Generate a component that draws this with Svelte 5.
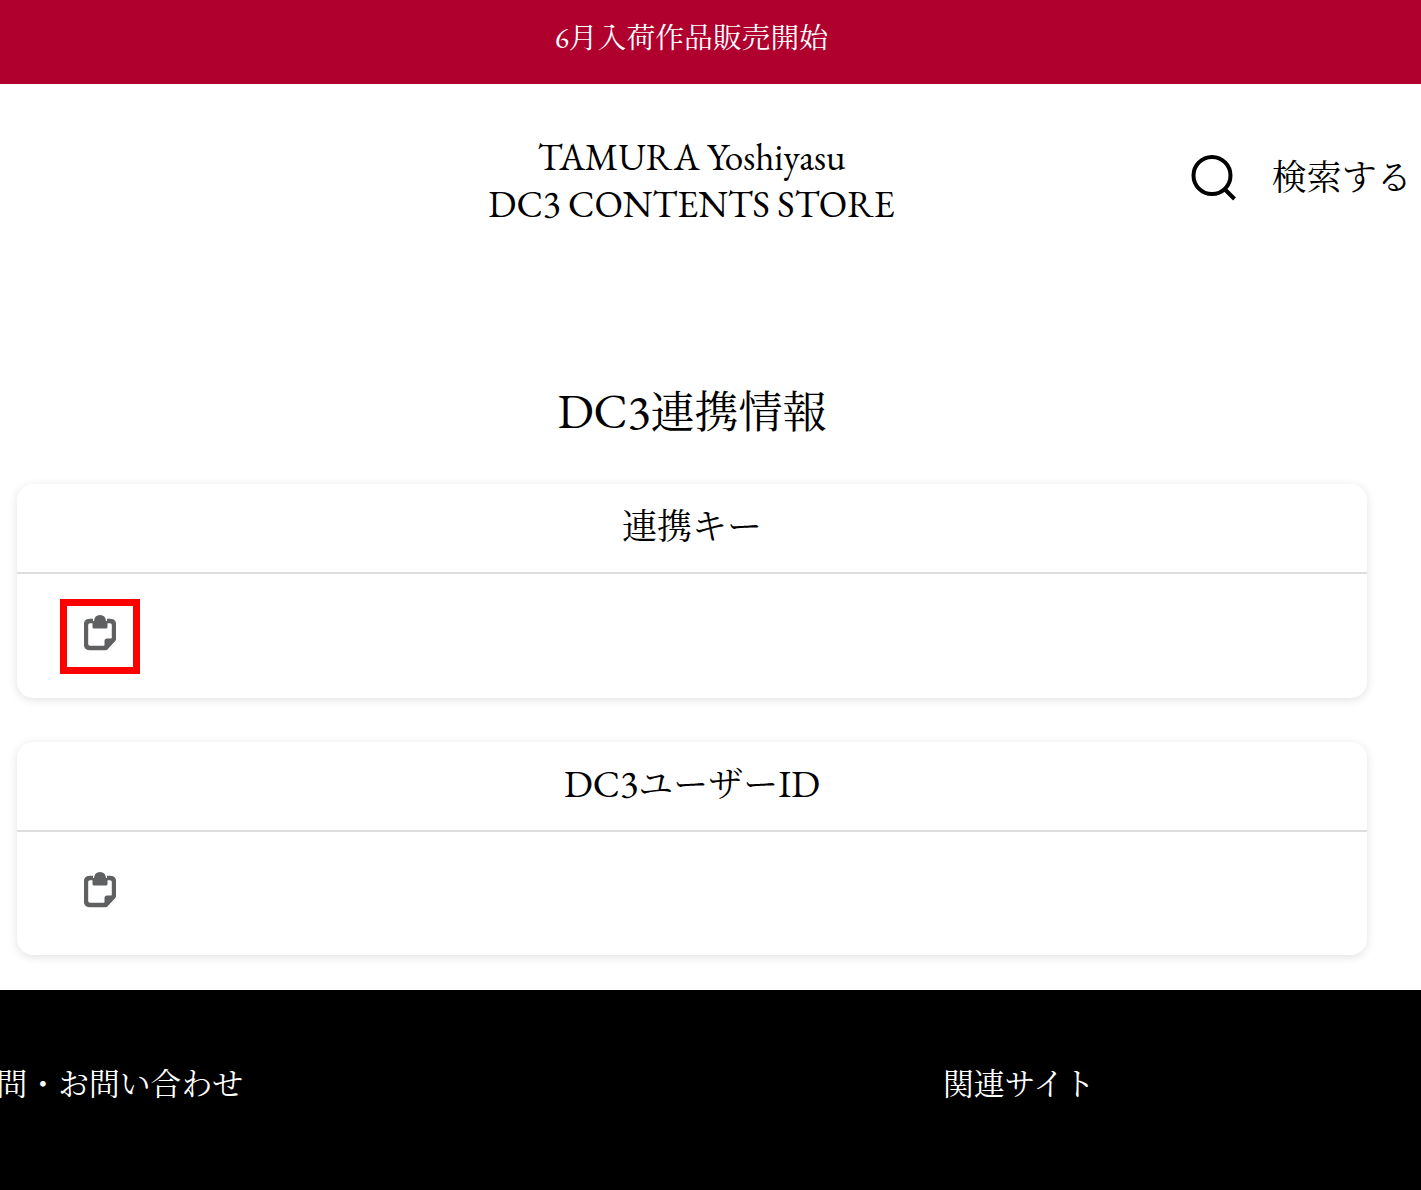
<script lang="ts">
	const cards = [
		{ title: [{ text: '連携キー' }], outlined: true },
		{
			title: [
				{ text: 'DC3', latin: true },
				{ text: 'ユーザー' },
				{ text: 'ID', latin: true }
			],
			outlined: false
		}
	];
</script>

<div class="announcement">6月入荷作品販売開始</div>

<header class="site-header">
	<span></span>
	<h1 class="logo">TAMURA Yoshiyasu<br />DC3 CONTENTS STORE</h1>
	<div class="search">
		<svg class="search-icon" viewBox="0 0 46 46" width="46" height="46" aria-hidden="true">
			<circle cx="21" cy="20.5" r="18.5" fill="none" stroke="#000" stroke-width="4" />
			<path d="M33.5 34 L43.5 44" fill="none" stroke="#000" stroke-width="4" />
		</svg>
		<span class="search-label">検索する</span>
	</div>
</header>

<main class="content">
	<h2 class="page-title"><span class="latin">DC3</span>連携情報</h2>

	{#each cards as card}
		<section class="card">
			<h3 class="card-title">
				{#each card.title as part}<span class:latin={part.latin}>{part.text}</span>{/each}
			</h3>
			<div class="card-body">
				<button class="copy" class:outlined={card.outlined} aria-label="コピー">
					<svg viewBox="0 0 32 36" width="32" height="36" aria-hidden="true">
						<path
							d="M9 6 H6 Q2 6 2 10 V29 Q2 33 6 33 H21 L30 24 V10 Q30 6 26 6 H23"
							fill="none"
							stroke="#5f6062"
							stroke-width="4.4"
						/>
						<path
							d="M8.5 12 V6 H10 Q10.5 0 16 0 Q21.5 0 22 6 H23.5 V12 Q23.5 13.5 22 13.5 H10 Q8.5 13.5 8.5 12 Z"
							fill="#5f6062"
						/>
						<path d="M20.5 34 V26 Q20.5 23.5 23 23.5 H31 V26 L23 35 H20.5 Z" fill="#5f6062" />
					</svg>
				</button>
			</div>
		</section>
	{/each}
</main>

<footer class="site-footer">
	<div class="footer-col inquiry"><span>質問・お問い合わせ</span></div>
	<div class="footer-col related"><span>関連サイト</span></div>
</footer>

<style>
	:global(body) {
		font-family: 'EB Garamond', 'Noto Serif CJK JP', 'Liberation Serif', 'Noto Sans CJK JP', serif;
		color: #000;
		background: #fff;
		overflow-x: hidden;
	}

	.latin {
		font-size: 1.09em;
		line-height: 0;
	}

	.announcement {
		height: 84px;
		padding-right: 38px;
		background: #b0002e;
		color: #fff;
		font-size: 28.8px;
		line-height: 76px;
		text-align: center;
	}

	.site-header {
		display: grid;
		grid-template-columns: minmax(0, 1fr) auto minmax(0, 1fr);
		height: 188px;
		padding: 50px 38px 0 0;
		box-sizing: border-box;
	}

	.logo {
		margin: 0;
		font-size: 37.2px;
		font-weight: 400;
		line-height: 47px;
		text-align: center;
	}

	.search {
		display: flex;
		align-items: center;
		align-self: start;
		gap: 35px;
		width: max-content;
		margin: 16px 0 0 296px;
		font-size: 35px;
		white-space: nowrap;
	}

	.search-icon {
		flex: none;
	}

	.search-label {
		padding-bottom: 6px;
	}

	.content {
		padding: 0 54px 35px 17px;
	}

	.page-title {
		margin: 0 0 40.4px;
		padding-top: 110px;
		font-size: 44px;
		font-weight: 400;
		line-height: 62px;
		text-align: center;
	}

	.card {
		background: #fff;
		border-radius: 16px;
		box-shadow: 0 2px 10px rgba(0, 0, 0, 0.12);
		margin-bottom: 44.4px;
	}

	.card:last-child {
		margin-bottom: 0;
	}

	.card-title {
		margin: 0;
		height: 88px;
		border-bottom: 2px solid #ddd;
		font-size: 35px;
		font-weight: 400;
		line-height: 86px;
		text-align: center;
	}

	.card-body {
		height: 123.2px;
		padding: 25px 0 0 43px;
		box-sizing: border-box;
	}

	.copy {
		display: flex;
		align-items: center;
		justify-content: center;
		width: 80px;
		height: 75px;
		padding: 0 0 8px;
		border: 0;
		background: none;
		box-sizing: border-box;
	}

	.copy.outlined {
		outline: 7px solid #f00;
		outline-offset: -7px;
	}

	.site-footer {
		display: flex;
		height: 200px;
		padding-top: 70px;
		background: #000;
		color: #fff;
		font-size: 30.8px;
		box-sizing: border-box;
		white-space: nowrap;
	}

	.footer-col {
		display: flex;
	}

	.inquiry {
		width: 243px;
		justify-content: flex-end;
	}

	.related {
		margin-left: 700px;
	}
</style>
